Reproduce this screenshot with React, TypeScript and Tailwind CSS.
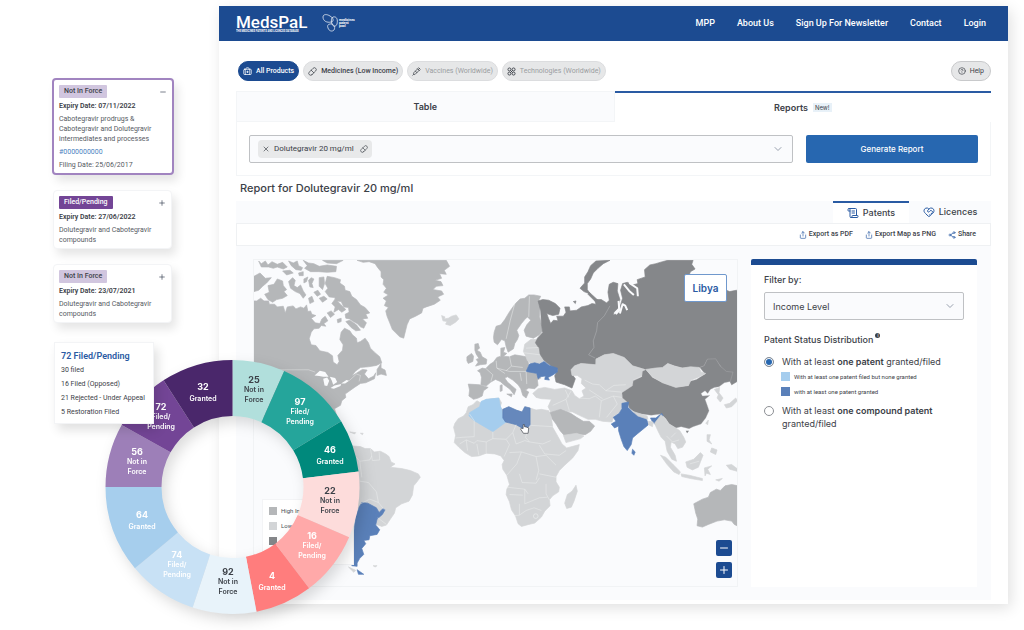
import type { ReactNode } from "react";
import {
  BriefcaseMedical,
  ChevronDown,
  CircleHelp,
  HeartHandshake,
  Minus,
  Pill,
  Plus,
  ScrollText,
  Share,
  Share2,
  Syringe,
  X,
} from "lucide-react";

const HIGH = "#b5b7b9";
const LOW = "#d3d5d7";
const UPPER = "#85878a";
const GRANTED = "#5a80b9";
const FILED = "#a5cdee";

type Slice = {
  from: number;
  to: number;
  color: string;
  ink: string;
  value: string;
  lines: string[];
  x: number;
  y: number;
};

const DARK = "#3c4148";
const WHITE = "#ffffff";

const slices: Slice[] = [
  { from: 0, to: 24, color: "#b1dfdc", ink: DARK, value: "25", lines: ["Not in", "Force"], x: 254, y: 380 },
  { from: 24, to: 58.8, color: "#25a59b", ink: WHITE, value: "97", lines: ["Filed/", "Pending"], x: 300, y: 402 },
  { from: 58.8, to: 83, color: "#00897c", ink: WHITE, value: "46", lines: ["Granted"], x: 330, y: 450 },
  { from: 83, to: 113.3, color: "#fddcdb", ink: DARK, value: "22", lines: ["Not in", "Force"], x: 330, y: 491 },
  { from: 113.3, to: 142.9, color: "#ffa9a9", ink: WHITE, value: "16", lines: ["Filed/", "Pending"], x: 312, y: 536 },
  { from: 142.9, to: 169.1, color: "#ff7d7d", ink: WHITE, value: "4", lines: ["Granted"], x: 272, y: 576 },
  { from: 169.1, to: 198.3, color: "#e8f3fa", ink: DARK, value: "92", lines: ["Not in", "Force"], x: 228, y: 572 },
  { from: 198.3, to: 230.2, color: "#c8e1f5", ink: WHITE, value: "74", lines: ["Filed/", "Pending"], x: 177, y: 555 },
  { from: 230.2, to: 270, color: "#a6ceed", ink: WHITE, value: "64", lines: ["Granted"], x: 142, y: 515 },
  { from: 270, to: 299.2, color: "#9d7fb8", ink: WHITE, value: "56", lines: ["Not in", "Force"], x: 137, y: 452 },
  { from: 299.2, to: 327.1, color: "#734596", ink: WHITE, value: "72", lines: ["Filed/", "Pending"], x: 161, y: 407 },
  { from: 327.1, to: 360, color: "#4a276b", ink: WHITE, value: "32", lines: ["Granted"], x: 203, y: 387 },
];

function ringPath(from: number, to: number) {
  const cx = 232.5;
  const cy = 487;
  const outer = 127;
  const inner = 71;
  const at = (deg: number, r: number) => {
    const a = (deg * Math.PI) / 180;
    return `${(cx + r * Math.sin(a)).toFixed(2)} ${(cy - r * Math.cos(a)).toFixed(2)}`;
  };
  return `M${at(from, outer)}A${outer} ${outer} 0 0 1 ${at(to, outer)}L${at(to, inner)}A${inner} ${inner} 0 0 0 ${at(from, inner)}Z`;
}

function Donut() {
  return (
    <svg
      viewBox="93 349 290 280"
      className="pointer-events-none absolute left-[93px] top-[349px] h-[280px] w-[290px] font-bold drop-shadow-[4px_6px_7px_rgba(0,0,0,0.14)]"
      role="img"
      aria-label="Patent status by income group"
    >
      {slices.map((s) => (
        <path key={s.from} d={ringPath(s.from, s.to)} fill={s.color} />
      ))}
      {slices.map((s) => (
        <g key={s.from} fill={s.ink} textAnchor="middle">
          <text x={s.x} y={s.y + 3} fontSize="9">
            {s.value}
          </text>
          {s.lines.map((line, i) => (
            <text key={line} x={s.x} y={s.y + (s.lines.length > 1 ? 12 : 14) + i * 10} fontSize="7" fontWeight="600">
              {line}
            </text>
          ))}
        </g>
      ))}
    </svg>
  );
}

function WorldMap() {
  return (
    <svg viewBox="254 259 484 327" className="block w-full" role="img" aria-label="World map of patent status">
      <g strokeLinejoin="round" strokeWidth="2">
        {/* North America, Greenland, Iceland */}
        <g transform="translate(240 250) scale(0.33333)" fill={HIGH} stroke={HIGH}>
          <path d="M30 150L50 150 62 142 72 150 86 150 88 160 104 160 112 168 130 166 136 186 142 168 160 165 168 174 182 168 192 172 200 162 204 182 212 180 216 190 228 194 214 202 226 216 240 218 246 204 256 196 264 210 252 218 258 226 244 224 238 232 222 234 214 244 208 264 214 282 228 284 240 300 264 305 278 315 280 334 292 342 298 332 294 314 308 298 310 282 300 266 304 244 314 232 330 240 338 252 350 262 352 276 362 272 376 262 386 276 392 292 404 304 420 318 426 336 410 344 386 348 362 350 346 362 336 376 352 366 368 356 382 358 374 370 386 384 402 376 408 366 404 384 378 396 362 398 344 410 330 420 316 430 318 440 306 450 302 464 284 474 292 500 30 500z" />
          <path d="M262 76L284 80 302 86 300 96 314 106 316 118 330 122 336 136 350 146 362 162 376 170 390 186 378 190 384 202 368 204 380 216 372 232 362 228 352 218 340 212 330 204 318 202 316 190 328 184 326 170 312 168 304 152 290 150 284 140 268 138 256 122 264 112 256 98z" />
          <path d="M84 104L102 100 112 84 128 90 130 104 140 116 132 122 142 134 128 142 110 146 98 154 84 146 74 130 88 124z" />
          <path d="M42 76L60 66 76 82 94 80 80 96 68 106 56 118 42 122z" />
          <path d="M146 92L158 80 166 88 162 104 172 110 182 102 190 120 198 132 190 142 180 128 166 122 152 112z" />
          <path d="M206 88L214 80 222 84 216 98 220 110 210 108z M238 80L252 78 254 98 248 116 238 106z M192 84L204 78 200 92 192 96z M222 124L234 118 242 130 232 136z M238 142L252 136 262 144 248 154z M206 142L216 136 222 152 210 158z" />
          <path d="M286 144L302 160 318 176 306 184 296 176 282 184 286 168 276 158z M262 186L274 180 284 190 272 200z M292 206L304 202 304 212 294 216z M318 212L330 208 350 222 362 238 348 240 334 230z" />
          <path d="M56 30L64 38 76 30 84 42 96 32 112 40 128 34 142 48 130 54 112 48 100 52 86 48 64 48z M146 30L160 36 172 30 176 44 188 50 184 58 168 56 154 44z M190 28L206 36 222 38 238 46 262 42 290 46 288 62 262 64 236 62 212 62 194 52 202 44z M248 28L310 28 290 38 262 36z M128 60L150 58 160 66 140 72z M176 66L190 62 190 74 178 74z" />
          <path d="M352 28L620 28 630 46 614 58 620 70 600 68 606 82 586 88 604 92 610 104 590 106 580 116 606 120 612 130 594 138 602 148 584 160 560 168 550 172 546 186 528 196 510 204 502 222 498 238 492 262 480 258 468 246 458 236 450 216 442 196 438 180 446 170 434 164 440 150 430 142 446 132 432 124 440 112 430 100 432 86 424 78 424 62 414 50 406 38 388 32 370 34z" />
          <path d="M412 356L424 338 424 352 436 358 440 374 424 370 412 374z" />
          <path fill={LOW} stroke={LOW} d="M606 194L616 198 614 204 626 202 636 196 650 192 658 204 648 214 632 224 618 220 622 212 610 210z" />
          <path fill="#fafbfd" stroke="none" d="M224 374L240 360 256 364 266 378 250 378 238 376z M250 384L262 380 268 390 262 406 254 404z M270 378L286 382 292 394 280 402 276 390z M272 412L284 404 304 400 302 406 282 414z M304 398L320 388 328 390 316 398z" />
          <path fill="none" stroke={WHITE} strokeWidth="1" d="M110 357L206 357 226 364 M328 390L350 370 362 374 358 392" />
        </g>

        <g transform="translate(490 250) scale(0.33333)">
          {/* Northern and central Europe */}
          <path fill={HIGH} stroke={HIGH} d="M14 244L20 226 34 222 46 206 58 186 66 174 78 158 92 144 106 142 118 132 134 132 154 136 148 148 152 170 150 196 160 240 150 252 132 262 110 256 104 238 112 222 124 208 114 198 106 206 96 218 82 238 88 254 84 266 76 278 72 294 56 304 50 288 46 270 36 266 24 282 14 274 12 260z" />
          <path fill={HIGH} stroke={HIGH} d="M34 292L46 290 42 304 52 308 42 316 60 318 76 312 112 318 116 332 118 344 110 362 126 364 144 370 154 382 144 388 146 404 136 414 118 412 108 418 118 424 110 442 100 434 94 414 86 402 70 388 54 378 46 382 54 394 66 404 80 416 74 432 62 416 46 404 32 392 18 386 4 394 -10 406 -26 402 -24 380 -28 366 -36 360 -22 352 -12 354 2 340 12 334 22 320 34 316z" />
          <path fill={HIGH} stroke={HIGH} d="M-64 400L-30 402 -4 410 -18 420 -22 436 -34 442 -48 446 -62 436 -60 418z M-44 280L-34 278 -30 292 -38 298 -28 304 -22 318 -8 326 -10 340 -28 342 -42 346 -34 334 -40 326 -32 322 -40 310 -44 298z M-68 318L-54 308 -48 316 -50 332 -64 338 -68 330z M32 404L38 402 38 420 32 422z M52 430L68 430 66 438z" />
          <path fill={LOW} stroke={LOW} d="M106 280L124 266 140 266 148 288 150 302 160 316 166 328 154 338 124 338 114 330 108 314 102 302z" />
          {/* Russia */}
          <path fill={UPPER} stroke={UPPER} d="M146 150L160 146 178 148 198 158 212 172 208 190 190 194 172 188 178 204 184 218 192 208 206 210 202 196 222 196 230 184 226 168 240 168 242 180 262 178 276 168 296 164 308 158 320 160 316 146 336 146 352 156 360 148 356 124 360 100 372 94 386 98 384 120 392 146 386 172 374 184 372 192 392 184 394 162 400 142 394 118 400 98 414 94 430 102 446 98 444 86 468 78 466 56 482 42 500 38 520 32 536 28 612 28 608 40 618 54 604 62 596 84 640 96 712 118 722 122 742 118 748 120 748 390 728 402 714 372 680 326 655 325 645 345 630 350 575 350 535 338 520 352 470 356 455 352 430 345 405 320 372 308 345 312 320 325 318 342 298 340 275 338 256 345 245 357 252 376 258 384 248 412 226 402 200 394 196 375 205 358 184 345 165 330 152 310 150 294 138 276 144 262 160 245 156 220 154 180z" />
          <path fill={UPPER} stroke={UPPER} d="M362 28L342 38 326 52 312 66 304 84 294 98 294 116 304 130 284 122 272 112 286 96 286 78 296 62 304 44 320 30z M300 124L326 148 318 152 296 130z M252 152L260 150 258 158z" />
          <path fill="none" stroke="#fafbfd" strokeWidth="6" d="M404 100L420 120 434 132 M420 96L444 112 446 136 M392 188L400 160 408 164 414 178 M380 190L390 176 388 150" />
          <path fill="none" stroke="#a9abad" d="M362 165L345 195 325 215 322 240 312 270 314 290 298 312 318 322" />
          <path fill={GRANTED} stroke={GRANTED} d="M120 340L136 336 150 340 164 332 180 344 204 352 204 364 188 374 176 380 180 388 166 386 168 376 154 378 146 384 142 368 110 362z" />
          {/* Middle East and central Asia */}
          <path fill={LOW} stroke={LOW} d="M130 428L146 414 166 410 196 416 226 412 248 420 256 434 270 444 284 436 278 420 290 412 276 398 278 384 264 374 248 374 245 357 256 345 275 338 320 342 320 325 345 312 372 308 405 320 430 345 466 356 456 376 432 388 430 404 396 426 402 440 416 454 398 462 394 484 374 496 368 514 340 512 318 506 296 506 270 494 250 484 232 482 216 476 184 484 176 468 186 446 156 444 140 440z" />
          <path fill={HIGH} stroke={HIGH} d="M180 486L214 476 244 488 262 500 282 512 300 512 316 526 304 542 288 552 262 550 226 556 212 540 200 520 188 504z" />
          <path fill={LOW} stroke={LOW} d="M222 554L262 548 284 556 274 564 230 576z" />
          <path fill={UPPER} stroke="#b5b7b9" strokeWidth="1" d="M470 356L490 380 520 395 560 408 598 405 600 392 622 386 648 370 632 350 645 345 655 325 680 324 694 346 712 362 732 364 724 392 706 396 690 408 676 410 664 416 656 428 648 420 636 428 640 436 662 434 648 446 654 462 660 480 650 502 636 520 612 528 600 534 576 528 560 532 540 520 530 504 516 490 486 494 440 488 420 472 414 454 400 442 398 426 430 405 432 390 458 378 460 362z" />
          <path fill={LOW} stroke={LOW} d="M470 356L498 352 520 350 536 338 556 346 580 352 604 348 630 350 636 364 650 368 626 380 606 388 598 404 560 410 520 396 490 378z" />
          <path fill={GRANTED} stroke={GRANTED} d="M398 458L418 454 416 470 430 484 450 490 470 500 478 522 466 532 444 550 430 562 426 582 414 600 404 588 396 566 388 540 388 526 376 532 366 520 380 512 372 500 390 488 398 474z M484 502L500 502 518 488 522 496 506 514 502 524 490 514z M430 596L438 604 434 614 428 608z" />
          <path fill={LOW} stroke={LOW} d="M430 482L474 496 476 506 446 496z M478 512L492 514 490 528 478 522z M496 518L516 492 530 506 540 520 560 532 572 540 584 560 590 574 580 590 566 594 558 580 546 574 544 590 558 614 562 632 548 626 534 602 528 572 516 560 506 540z" />
          <path fill={LOW} stroke={LOW} d="M514 614L530 620 552 642 574 664 570 672 554 664 534 642z M576 670L600 674 640 684 640 690 604 684 578 678z M590 634L614 626 634 606 642 614 634 634 628 650 610 658 594 650z M646 652L668 646 656 656 664 672 652 668 648 676z M654 552L664 552 660 568 668 580 654 572z M668 592L684 598 680 612 664 604z M712 644L728 642 744 654 744 662 722 656z M680 688L700 684 690 692z" />
          <path fill={LOW} stroke={LOW} d="M676 416L692 410 690 426 702 442 694 454 684 442 688 432z M706 462L722 458 740 442 746 450 728 468 712 472z M650 518L658 508 656 522z" />
          <path fill={UPPER} d="M590 540L600 540 594 548z" />
          <path fill={HIGH} stroke={HIGH} d="M614 760L640 746 658 740 664 726 682 716 694 720 708 706 728 702 748 706 748 828 736 822 728 812 706 808 684 812 658 822 640 830 624 826 626 806 620 788z" />
          <path fill={LOW} stroke={LOW} d="M260 704L264 722 254 752 246 770 232 774 226 758 234 732 248 722z" />
          <path fill="none" stroke="#eceeef" strokeWidth="1.5" d="M20 330L22 352 46 368 M60 316L66 346 50 360 M22 352L60 362 110 362 M-10 354L10 372 4 392 M66 346L100 350 M92 366L96 390 M110 362L112 400 M76 158L62 210 50 264 M120 136L118 198 M110 292L148 290 M104 306L152 312 M246 420L230 446 240 480 M228 418L238 440 M270 442L300 444 318 436 336 450 330 500 M336 450L372 436 398 440 M286 388L310 400 330 402 350 420 396 424 M300 418L340 444 M350 420L374 404 410 402 M372 436L384 460 352 500 M190 464L230 446 M546 560L560 546 M532 556L550 574 570 568 M602 640L630 632" />
        </g>

        {/* South America and Africa */}
        <g transform="translate(340 420) scale(0.33333)">
          <path fill={LOW} stroke={LOW} d="M10 90L36 76 62 78 76 84 92 84 104 94 122 92 138 100 148 108 154 124 166 130 152 140 186 144 212 150 236 160 242 170 232 184 222 196 218 224 208 242 186 250 168 262 164 278 152 296 140 314 126 318 110 312 108 290 60 262 10 262z M30 34L48 36 44 40z M62 38L70 38 68 42z M26 440L48 450 42 456z M100 436L112 436 106 440z" />
          <path fill={GRANTED} stroke={GRANTED} d="M58 260L66 246 84 248 110 262 118 276 130 264 136 268 128 282 112 296 108 314 120 328 112 342 90 346 88 358 72 360 78 370 66 384 72 402 60 414 52 428 52 438 36 436 42 404 40 350 48 290z M52 448L72 462 56 462z" />
          <path fill={LOW} stroke={LOW} d="M342 20L346 8 356 -6 372 -14 380 -24 386 -42 400 -48 412 -60 426 -52 440 -64 478 -68 486 -54 482 -40 490 -34 508 -42 530 -32 548 -26 556 -42 572 -38 590 -32 606 -34 628 -30 636 -10 640 20 656 48 668 70 682 82 720 72 716 90 700 112 676 134 660 150 650 168 650 184 660 200 658 214 640 226 630 238 632 256 616 272 606 290 586 308 568 312 546 318 536 310 528 286 516 268 510 244 500 222 502 206 510 192 502 164 490 146 488 132 494 120 484 106 466 100 440 98 418 106 396 108 376 96 358 80 344 66 348 44z" />
          <path fill={FILED} stroke={FILED} d="M425 -58L440 -64 478 -68 482 -46 488 -30 490 -8 500 4 460 33 404 0 388 -14 390 -24 420 -42z" />
          <path fill={GRANTED} stroke={GRANTED} fillOpacity="0.9" d="M490 -34L508 -42 530 -32 548 -26 556 -42 572 -38 572 14 558 28 530 12 498 4 490 -8z" />
          <path fill="none" stroke="#eceeef" strokeWidth="1.5" d="M50 110L60 122 90 118 96 106 M92 84L98 120 120 118 118 94 M60 122L66 170 M60 182L86 186 110 214 116 246 90 236 62 250 M116 246L134 268 M114 292L140 312 M390 -20L404 0 404 48 370 50 348 52 M360 70L380 58 404 68 412 60 440 64 460 54 460 33 M380 58L384 90 M412 70L418 104 M440 64L440 98 M460 54L500 56 520 36 530 12 M500 56L510 72 494 108 M520 36L530 70 556 60 570 64 M572 14L640 18 M572 14L558 50 570 64 610 70 634 60 M510 96L546 94 590 108 620 104 650 134 M546 94L532 130 502 164 M600 74L616 100 660 104 680 90 M590 108L598 150 590 178 M540 160L548 186 590 188 600 172 M502 200L556 206 566 220 M600 160L650 170 M556 206L556 250 580 240 600 232 624 230 M510 222L550 224 M540 250L540 284 524 286 M540 284L560 270 584 262 606 270 M620 190L620 220 630 238" />
          <circle cx="589" cy="287" r="7" fill="none" stroke="#eceeef" strokeWidth="2" />
          <path fill={WHITE} stroke="#3c4148" d="M551 12L551 24 546 22 544 26 552 38 566 38 568 22 560 19 555 18 555 12z" />
        </g>
      </g>
    </svg>
  );
}

function MapLegend() {
  const rows = [
    { name: "High Income", swatch: "bg-[#b5b7b9]" },
    { name: "Low Income", swatch: "bg-[#d3d5d7]" },
    { name: "Lower", swatch: "bg-[#85878a]" },
  ];
  return (
    <ul className="absolute bottom-[21px] left-2 flex h-[66px] w-[92px] flex-col gap-[7px] border border-gray-100 bg-white px-1.5 py-[7px] font-['Roboto',sans-serif] text-[6px] leading-2 text-[#4a4f57]">
      {rows.map((r) => (
        <li key={r.name} className="flex items-center gap-1">
          <span className={`size-2 shrink-0 ${r.swatch}`} />
          {r.name}
        </li>
      ))}
    </ul>
  );
}

function TechnologiesIcon() {
  return (
    <svg viewBox="0 0 24 24" className="size-[9px] text-[#3c4148]" fill="none" stroke="currentColor" strokeWidth="2.4">
      <circle cx="6.5" cy="6.5" r="4" />
      <circle cx="17.5" cy="6.5" r="4" />
      <circle cx="6.5" cy="17.5" r="4" />
      <circle cx="17.5" cy="17.5" r="4" />
      <path d="M9 9L15 15M15 9L9 15" />
    </svg>
  );
}

function PillButton({ children, className }: { children: ReactNode; className: string }) {
  return (
    <button
      type="button"
      className={`flex h-5 items-center gap-1 rounded-full border px-1 font-['Roboto',sans-serif] text-[7px] ${className}`}
    >
      {children}
    </button>
  );
}

function PatentCard(props: { status: string; tone: string; expiry: string; children: ReactNode; open?: boolean }) {
  return (
    <article
      className={`bg-white px-[5px] pb-[3px] pt-[5px] font-['Roboto',sans-serif] text-[7px] leading-[10px] text-[#555a62] shadow-[4px_6px_10px_rgba(0,0,0,0.10)] ${
        props.open ? "w-[122px] rounded border-2 border-[#a184c0]" : "ml-px w-[119px] rounded-sm border border-gray-100"
      }`}
    >
      <div className="flex items-center justify-between">
        <span className={`rounded-[1px] px-[5px] py-px leading-[11px] font-medium ${props.tone}`}>{props.status}</span>
        <button type="button" aria-label={props.open ? "Collapse" : "Expand"} className="text-gray-700">
          {props.open ? <Minus className="size-2" /> : <Plus className="size-2" />}
        </button>
      </div>
      <p className="mt-[3px] font-semibold text-[#3c4148]">Expiry Date: {props.expiry}</p>
      <div className="mt-[3px]">{props.children}</div>
    </article>
  );
}

function Logo() {
  return (
    <a href="#" aria-label="MedsPaL" className="text-white">
      <svg viewBox="0 0 124 24" className="h-6 w-[124px]" fill="currentColor">
        <text x="0" y="16" fontSize="17" fontWeight="500" fontFamily="Roboto, sans-serif">
          MedsPaL
        </text>
        <text x="0" y="20" fontSize="2.6" fontWeight="700" fontFamily="Roboto, sans-serif">
          THE MEDICINES PATENTS AND LICENCES DATABASE
        </text>
        <g fill="none" stroke="currentColor" strokeWidth="0.7">
          <path d="M87 5C87 2 91 2 94 4C98 6 98 10 95 10C91 11 87 9 87 5z" />
          <path d="M97 5C101 4 102 8 101 12C100 15 97 15 96 12C95 9 95 6 97 5z" />
          <path d="M94 12C97 11 100 15 98 18C96 20 93 19 92 16C91 14 92 12 94 12z" />
        </g>
        <g fontSize="3.4" fontWeight="700" fontFamily="Roboto, sans-serif">
          <text x="103" y="9">medicines</text>
          <text x="103" y="12">patent</text>
          <text x="103" y="15">pool</text>
        </g>
      </svg>
    </a>
  );
}

export default function App() {
  return (
    <div className="relative flex min-h-screen items-start overflow-hidden bg-white font-['Inter','Noto_Sans',sans-serif] text-[#3c4148]">
      <aside className="w-[219px] shrink-0 pl-[52px] pt-[78px]">
        <div className="flex flex-col items-start gap-[15px]">
          <PatentCard status="Not In Force" tone="bg-[#d1c6df] text-[#3c4148]" expiry="07/11/2022" open>
            <p>Cabotegravir prodrugs &amp; Cabotegravir and Dolutegravir intermediates and processes</p>
            <p className="mt-[3px]">
              <a href="#" className="text-[#4a7fc0]">#0000000000</a>
            </p>
            <p className="mt-[3px]">Filing Date: 25/06/2017</p>
          </PatentCard>
          <PatentCard status="Filed/Pending" tone="bg-[#734596] text-white" expiry="27/06/2022">
            <p>Dolutegravir and Cabotegravir compounds</p>
          </PatentCard>
          <PatentCard status="Not In Force" tone="bg-[#d1c6df] text-[#3c4148]" expiry="23/07/2021">
            <p>Dolutegravir and Cabotegravir compounds</p>
          </PatentCard>
        </div>
      </aside>

      <main className="mb-6 mr-4 mt-[6px] min-w-0 flex-1 bg-white pb-1 shadow-[3px_4px_14px_rgba(0,0,0,0.12)]">
        <header className="flex h-[35px] items-center justify-between bg-[#1c4b91] pl-[17px] pr-[22px]">
          <Logo />
          <nav className="flex gap-[22px] font-['Roboto',sans-serif] text-[9px] font-medium text-white">
            <a href="#">MPP</a>
            <a href="#">About Us</a>
            <a href="#">Sign Up For Newsletter</a>
            <a href="#">Contact</a>
            <a href="#">Login</a>
          </nav>
        </header>

        <div className="px-[17px] pt-5">
          <div className="flex items-center gap-1 pl-0.5">
            <PillButton className="border-[#1c4b91] bg-[#1c4b91] font-medium text-white">
              <BriefcaseMedical className="size-[9px]" />
              All Products
            </PillButton>
            <PillButton className="border-[#dcdddf] bg-[#e6e7e8] font-medium">
              <Pill className="size-[9px]" />
              Medicines (Low Income)
            </PillButton>
            <PillButton className="border-[#dcdddf] bg-[#e6e7e8] text-[#9a9da1]">
              <Syringe className="size-[9px] text-[#3c4148]" />
              Vaccines (Worldwide)
            </PillButton>
            <PillButton className="border-[#dcdddf] bg-[#e6e7e8] text-[#9a9da1]">
              <TechnologiesIcon />
              Technologies (Worldwide)
            </PillButton>
            <PillButton className="ml-auto border-[#c8c9cb] bg-[#e6e7e8] px-1.5">
              <CircleHelp className="size-2" />
              Help
            </PillButton>
          </div>

          <div className="mt-[10px] flex h-[31px] text-[9px] font-semibold">
            <button type="button" className="flex-1 border border-[#f3f5f7] bg-[#fafbfd]">
              Table
            </button>
            <button type="button" className="flex flex-1 items-center justify-center gap-[5px] border-t-2 border-[#2a5ba3]">
              Reports
              <span className="bg-[#e8f1f8] px-0.5 text-[6px] leading-[9px] font-normal">New!</span>
            </button>
          </div>
          <form
            className="flex gap-[13px] border border-t-0 border-[#f3f5f7] px-3 pb-3 pt-[13px]"
            onSubmit={(e) => e.preventDefault()}
          >
            <div className="flex h-7 min-w-0 flex-1 items-center rounded-xs border border-[#bfc1c4] bg-[#fafbfd] px-2">
              <span className="flex h-[18px] shrink-0 items-center gap-1 rounded bg-[#e8e9ea] px-1 font-['Roboto',sans-serif] text-[8px]">
                <button type="button" aria-label="Remove">
                  <X className="size-2" />
                </button>
                Dolutegravir 20 mg/ml
                <Pill className="ml-0.5 size-2" />
              </span>
              <input aria-label="Search products" className="min-w-0 flex-1 bg-transparent pl-2 text-[8px] outline-none" />
              <button type="button" aria-label="Open list" className="text-gray-400">
                <ChevronDown className="size-3" />
              </button>
            </div>
            <button type="submit" className="h-7 w-[172px] rounded-xs bg-[#2767b0] text-[8px] font-medium text-white">
              Generate Report
            </button>
          </form>

          <h1 className="py-[5px] pl-1 text-[11px] leading-[15px] font-medium">Report for Dolutegravir 20 mg/ml</h1>

          <div className="flex h-[22px] justify-end bg-[#fafbfd] text-[9px] font-medium">
            <button type="button" className="flex w-[76px] items-center justify-center gap-1 border-t-2 border-[#2a5ba3] bg-white">
              <ScrollText className="size-3 text-[#2a5ba3]" />
              Patents
            </button>
            <button type="button" className="flex w-[82px] items-center justify-center gap-1">
              <HeartHandshake className="size-3 text-[#2a5ba3]" />
              Licences
            </button>
          </div>
          <div className="flex h-[23px] items-center justify-end gap-3 border border-[#eff1f3] bg-white pr-3.5 font-['Roboto',sans-serif] text-[7px] font-medium">
            <button type="button" className="flex items-center gap-0.5">
              <Share className="size-2 text-[#2a5ba3]" />
              Export as PDF
            </button>
            <button type="button" className="flex items-center gap-0.5">
              <Share className="size-2 text-[#2a5ba3]" />
              Export Map as PNG
            </button>
            <button type="button" className="flex items-center gap-0.5">
              <Share2 className="size-2 text-[#2a5ba3]" />
              Share
            </button>
          </div>

          <section className="flex gap-[13px] bg-[#fafbfd] pb-[13px] pl-[17px] pr-3.5 pt-[13px]">
            <div className="relative min-w-0 flex-1 self-start border border-[#f1f3f5]">
              <WorldMap />
              <MapLegend />
              <div className="absolute right-2.5 top-3.5 flex h-7 w-[43px] items-center justify-center rounded-xs border border-[#6f98cd] bg-white text-[10px] font-semibold text-[#2a5ba3]">
                Libya
              </div>
              <div className="absolute bottom-2 right-[5px] flex flex-col gap-1.5 text-white">
                <button type="button" aria-label="Zoom out" className="flex size-4 items-center justify-center rounded-xs bg-[#1c4b91]">
                  <Minus className="size-3" />
                </button>
                <button type="button" aria-label="Zoom in" className="flex size-4 items-center justify-center rounded-xs bg-[#1c4b91]">
                  <Plus className="size-3" />
                </button>
              </div>
            </div>

            <aside className="w-[226px] shrink-0 rounded-t-xs border-t-[6px] border-[#1c4b91] bg-white px-[13px] pt-2 text-[9px] leading-[13px]">
              <label htmlFor="filter" className="font-medium">
                Filter by:
              </label>
              <div className="relative mt-[6px]">
                <select
                  id="filter"
                  className="h-7 w-full appearance-none rounded-xs border border-[#bfc1c4] bg-[#fafbfd] px-2 text-[9px]"
                >
                  <option>Income Level</option>
                </select>
                <ChevronDown className="pointer-events-none absolute right-2 top-2 size-3 text-gray-400" />
              </div>
              <fieldset className="mt-[13px]">
                <legend className="flex items-start font-medium">
                  Patent Status Distribution
                  <span className="ml-0.5 flex size-[5px] items-center justify-center rounded-full bg-[#3c4148] text-[4px] text-white">i</span>
                </legend>
                <label className="mt-[9px] flex gap-2">
                  <input
                    type="radio"
                    name="scope"
                    defaultChecked
                    className="mt-0.5 size-[10px] shrink-0 appearance-none rounded-full border border-[#8d9095] checked:bg-[#2767b0] checked:shadow-[inset_0_0_0_1px_white]"
                  />
                  <span>
                    With at least <b className="font-semibold">one patent</b> granted/filed
                  </span>
                </label>
                <ul className="ml-[17px] mt-1 flex flex-col gap-1.5 font-['Roboto',sans-serif] text-[6px] leading-[9px]">
                  <li className="flex items-center gap-1">
                    <span className="size-[9px] bg-[#a5cdee]" />
                    With at least one patent filed but none granted
                  </li>
                  <li className="flex items-center gap-1">
                    <span className="size-[9px] bg-[#5a80b9]" />
                    with at least one patent granted
                  </li>
                </ul>
                <label className="mt-2 flex gap-2">
                  <input
                    type="radio"
                    name="scope"
                    className="mt-0.5 size-[10px] shrink-0 appearance-none rounded-full border border-[#8d9095] checked:bg-[#2767b0] checked:shadow-[inset_0_0_0_1px_white]"
                  />
                  <span>
                    With at least <b className="font-semibold">one compound patent</b> granted/filed
                  </span>
                </label>
              </fieldset>
            </aside>
          </section>
        </div>
      </main>

      <Donut />
      <div
        role="tooltip"
        className="absolute left-[54px] top-[342px] w-[100px] border border-gray-100 bg-white px-1.5 pb-1 pt-1.5 font-['Roboto',sans-serif] text-[7px] leading-[14px] shadow-[4px_6px_10px_rgba(0,0,0,0.12)]"
      >
        <p className="text-[9px] font-semibold text-[#2a5ba3]">72 Filed/Pending</p>
        <p>30 filed</p>
        <p>16 Filed (Opposed)</p>
        <p className="whitespace-nowrap">21 Rejected - Under Appeal</p>
        <p>5 Restoration Filed</p>
      </div>
    </div>
  );
}
